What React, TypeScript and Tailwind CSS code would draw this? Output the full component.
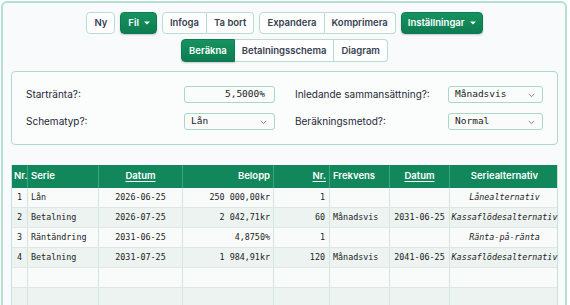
import React from "react";

const mono = "font-['DejaVu_Sans_Mono','Liberation_Mono',monospace]";
const sans = "font-['Inter','Noto_Sans',sans-serif]";

function Caret() {
  return (
    <svg width="6" height="4" viewBox="0 0 6 4" className="ml-[5px]">
      <path d="M0 0.5 L6 0.5 L3 3.5 Z" fill="white" />
    </svg>
  );
}

function Chevron() {
  return (
    <svg width="7" height="5" viewBox="0 0 7 5" className="absolute right-[7px] top-[6px]">
      <path d="M0.8 1 L3.5 3.6 L6.2 1" fill="none" stroke="#6b7280" strokeWidth="0.9" />
    </svg>
  );
}

const btnBase =
  "h-[22px] flex items-center text-[9.5px] font-semibold leading-none";
const outline = "bg-white text-[#374151] border border-[#b9dccd]";
const green =
  "text-white bg-gradient-to-b from-[#16935f] to-[#0e7c52] border border-[#0e7c52] shadow-[0_1px_2px_rgba(0,0,0,0.2)]";

function Select({ value, w }: { value: string; w: string }) {
  return (
    <div
      className={`relative h-[17px] ${w} rounded-[3px] border border-[#a9d8c4] bg-[#f9fcfb] ${mono} text-[9.5px] text-[#222] flex items-center pl-[6px]`}
    >
      {value}
      <Chevron />
    </div>
  );
}

type Row = {
  nr: string;
  serie: string;
  datum: string;
  belopp: string;
  n: string;
  frek: string;
  datum2: string;
  alt: string;
};

const rows: Row[] = [
  { nr: "1", serie: "Lån", datum: "2026-06-25", belopp: "250 000,00kr", n: "1", frek: "", datum2: "", alt: "Lånealternativ" },
  { nr: "2", serie: "Betalning", datum: "2026-07-25", belopp: "2 042,71kr", n: "60", frek: "Månadsvis", datum2: "2031-06-25", alt: "Kassaflödesalternativ" },
  { nr: "3", serie: "Räntändring", datum: "2031-06-25", belopp: "4,8750%", n: "1", frek: "", datum2: "", alt: "Ränta-på-ränta" },
  { nr: "4", serie: "Betalning", datum: "2031-07-25", belopp: "1 984,91kr", n: "120", frek: "Månadsvis", datum2: "2041-06-25", alt: "Kassaflödesalternativ" },
  { nr: "", serie: "", datum: "", belopp: "", n: "", frek: "", datum2: "", alt: "" },
  { nr: "", serie: "", datum: "", belopp: "", n: "", frek: "", datum2: "", alt: "" },
];

const cols = "grid grid-cols-[16px_71px_84px_91px_56px_60px_60px_109px]";

export default function App() {
  return (
    <div className={`w-[570px] h-[305px] overflow-hidden bg-white ${sans}`}>
      <div className="ml-[1px] mt-[1px] w-[566px] h-[320px] rounded-[6px] border-2 border-[#b3e0cf] bg-[#f8fafb] pt-[9px] pl-[8px] pr-[7px]">
        {/* toolbar row 1 */}
        <div className="flex justify-center gap-[5px]">
          <div className={`${btnBase} ${outline} rounded-[4px] px-[7px]`}>Ny</div>
          <div className={`${btnBase} ${green} rounded-[4px] pl-[7px] pr-[6px]`}>
            Fil
            <Caret />
          </div>
          <div className="flex">
            <div className={`${btnBase} ${outline} rounded-l-[4px] px-[7px]`}>Infoga</div>
            <div className={`${btnBase} ${outline} border-l-0 rounded-r-[4px] px-[7px]`}>Ta bort</div>
          </div>
          <div className="flex">
            <div className={`${btnBase} ${outline} rounded-l-[4px] px-[7px]`}>Expandera</div>
            <div className={`${btnBase} ${outline} border-l-0 rounded-r-[4px] px-[7px]`}>Komprimera</div>
          </div>
          <div className={`${btnBase} ${green} rounded-[4px] pl-[6px] pr-[6px]`}>
            Inställningar
            <Caret />
          </div>
        </div>
        {/* toolbar row 2 */}
        <div className="flex justify-center mt-[5px]">
          <div className={`${btnBase} h-[23px] ${green} rounded-l-[4px] px-[7px]`}>Beräkna</div>
          <div className={`${btnBase} h-[23px] ${outline} border-l-0 px-[7px]`}>Betalningsschema</div>
          <div className={`${btnBase} h-[23px] ${outline} border-l-0 rounded-r-[4px] px-[7px]`}>Diagram</div>
        </div>

        {/* form panel */}
        <div className="mt-[9px] w-[547px] rounded-[4px] border border-[#acdcc8] bg-[#fbfcfc] px-[14px] py-[14px]">
          <div className="grid grid-cols-[158px_91px_20px_153px_95px] gap-y-[10px] items-center text-[10px] text-[#1f2937]">
            <div>Startränta?:</div>
            <div className={`h-[17px] rounded-[3px] border border-[#a9d8c4] bg-[#f9fcfb] ${mono} text-[9.5px] text-[#222] flex items-center justify-end pr-[9px]`}>
              5,5000%
            </div>
            <div />
            <div>Inledande sammansättning?:</div>
            <Select value="Månadsvis" w="w-[95px]" />
            <div>Schematyp?:</div>
            <Select value="Lån" w="w-[91px]" />
            <div />
            <div>Beräkningsmetod?:</div>
            <Select value="Normal" w="w-[95px]" />
          </div>
        </div>

        {/* table */}
        <div className="mt-[20px] w-[547px] border-l border-r border-[#c9e2d8]">
          <div className={`${cols} h-[23px] bg-[#11875b] text-white text-[9.5px] font-semibold items-stretch`}>
            <div className="flex items-center pl-[2px] border-r border-[#3fa57f]">Nr.</div>
            <div className="flex items-center pl-[3px] border-r border-[#3fa57f]">Serie</div>
            <div className="flex items-center justify-center border-r border-[#3fa57f]">
              <span className="underline underline-offset-2">Datum</span>
            </div>
            <div className="flex items-center justify-end pr-[3px] border-r border-[#3fa57f]">Belopp</div>
            <div className="flex items-center justify-end pr-[3px] border-r border-[#3fa57f]">
              <span className="underline underline-offset-2">Nr.</span>
            </div>
            <div className="flex items-center pl-[3px] border-r border-[#3fa57f]">Frekvens</div>
            <div className="flex items-center justify-center border-r border-[#3fa57f]">
              <span className="underline underline-offset-2">Datum</span>
            </div>
            <div className="flex items-center justify-center">Seriealternativ</div>
          </div>
          {rows.map((r, i) => (
            <div
              key={i}
              className={`${cols} h-[20px] ${mono} text-[8.4px] text-[#222] border-b border-[#dce9e4] ${i % 2 === 0 ? "bg-[#f9fbfb]" : "bg-[#edf3f1]"}`}
            >
              <div className="flex items-center justify-center border-r border-[#d3e5de]">{r.nr}</div>
              <div className="flex items-center pl-[3px] border-r border-[#d3e5de]">{r.serie}</div>
              <div className="flex items-center justify-center border-r border-[#d3e5de]">{r.datum}</div>
              <div className="flex items-center justify-end pr-[3px] border-r border-[#d3e5de] whitespace-pre">{r.belopp}</div>
              <div className="flex items-center justify-end pr-[4px] border-r border-[#d3e5de]">{r.n}</div>
              <div className="flex items-center pl-[3px] border-r border-[#d3e5de]">{r.frek}</div>
              <div className="flex items-center justify-center border-r border-[#d3e5de]">{r.datum2}</div>
              <div className="flex items-center justify-center italic whitespace-nowrap overflow-hidden">{r.alt}</div>
            </div>
          ))}
        </div>
      </div>
    </div>
  );
}
